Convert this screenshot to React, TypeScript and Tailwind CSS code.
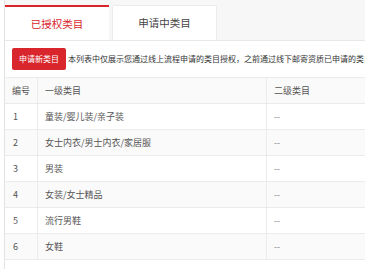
import React from "react";

const rows = [
  { id: "1", a: "童装/婴儿装/亲子装", b: "--" },
  { id: "2", a: "女士内衣/男士内衣/家居服", b: "--" },
  { id: "3", a: "男装", b: "--" },
  { id: "4", a: "女装/女士精品", b: "--" },
  { id: "5", a: "流行男鞋", b: "--" },
  { id: "6", a: "女鞋", b: "--" },
];

export default function App() {
  return (
    <div className="w-[365px] h-[269px] overflow-hidden bg-white font-['Noto_Sans_CJK_SC','Noto_Sans',sans-serif]">
      <div className="ml-[4px] h-full border-l border-[#e3e3e3] bg-white w-[440px]">
        <div className="h-[41px] bg-[#f7f7f7] border-b border-[#e8e8e8] flex items-end">
          <div className="w-[104px] h-[35px] bg-white border-t-2 border-[#d9262c] text-[#d9262c] text-[10.5px] flex items-center justify-center">
            已授权类目
          </div>
          <div className="ml-[3px] w-[105px] h-[35px] bg-white border border-b-0 border-[#ececec] rounded-t-[2px] text-[#444] text-[10.5px] flex items-center justify-center">
            申请中类目
          </div>
        </div>
        <div className="flex items-center pl-[7px] pt-[7px]">
          <div className="w-[54px] h-[22px] bg-[#d9262c] rounded-[2px] text-white text-[8px] flex items-center justify-center shrink-0">
            申请新类目
          </div>
          <div className="ml-[2px] text-[8px] text-[#333] whitespace-nowrap">
            本列表中仅展示您通过线上流程申请的类目授权，之前通过线下邮寄资质已申请的类目
          </div>
        </div>
        <div className="mt-[7px] border-t border-[#ebebeb] text-[9px] text-[#555]">
          <div className="flex h-[26px] border-b border-[#ebebeb] bg-[#fafafa]">
            <div className="w-[33px] border-r border-[#ebebeb] flex items-center pl-[7px]">编号</div>
            <div className="w-[229px] border-r border-[#ebebeb] flex items-center pl-[7px]">一级类目</div>
            <div className="flex-1 flex items-center pl-[7px]">二级类目</div>
          </div>
          {rows.map((r, i) => (
            <div
              key={r.id}
              className={`flex h-[26px] border-b border-[#ebebeb] ${i % 2 === 1 ? "bg-[#fafafa]" : "bg-white"}`}
            >
              <div className="w-[33px] border-r border-[#ebebeb] flex items-center pl-[8px]">{r.id}</div>
              <div className="w-[229px] border-r border-[#ebebeb] flex items-center pl-[7px]">{r.a}</div>
              <div className="flex-1 flex items-center pl-[7px] text-[#888]">{r.b}</div>
            </div>
          ))}
        </div>
      </div>
    </div>
  );
}
